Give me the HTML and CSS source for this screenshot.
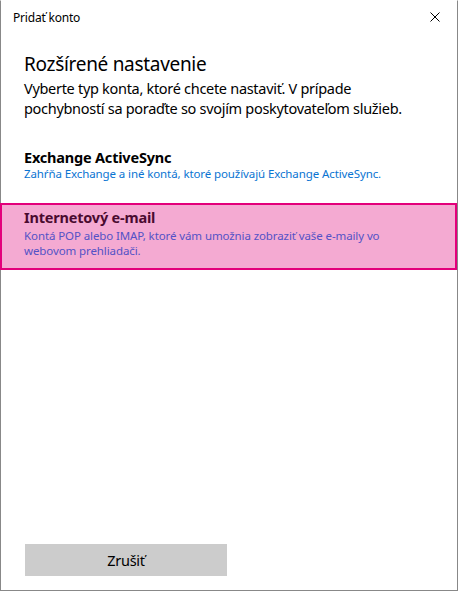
FILE: index.html
```html
<!DOCTYPE html>
<html lang="sk">
<head>
<meta charset="utf-8">
<title>Pridať konto</title>
<link rel="stylesheet" href="styles.css">
</head>
<body>
<div class="window">
  <div class="titlebar">
    <span class="title">Pridať konto</span>
    <svg class="close" width="10" height="10" viewBox="0 0 10 10"><path d="M0.5 0.5L9.5 9.5M9.5 0.5L0.5 9.5" stroke="#000" stroke-width="1" fill="none"/></svg>
  </div>
  <div class="intro">
    <h1 class="heading">Rozšírené nastavenie</h1>
    <p class="lead">Vyberte typ konta, ktoré chcete nastaviť. V prípade pochybností sa poraďte so svojím poskytovateľom služieb.</p>
  </div>
  <div class="options">
    <div class="option">
      <div class="opt-title">Exchange ActiveSync</div>
      <div class="opt-desc">Zahŕňa Exchange a iné kontá, ktoré používajú Exchange ActiveSync.</div>
    </div>
    <div class="option selected">
      <div class="opt-title">Internetový e-mail</div>
      <div class="opt-desc">Kontá POP alebo IMAP, ktoré vám umožnia zobraziť vaše e-maily vo webovom prehliadači.</div>
    </div>
  </div>
  <div class="spacer"></div>
  <div class="footer">
    <button class="btn">Zrušiť</button>
  </div>
</div>
</body>
</html>
```
FILE: styles.css
```css
html, body {
  margin: 0;
  padding: 0;
  background: #fff;
}
body {
  font-family: "Noto Sans", "Open Sans", sans-serif;
  color: #000;
}
.window {
  box-sizing: border-box;
  width: 458px;
  height: 591px;
  border: 1px solid #888;
  border-top-color: #fff;
  display: flex;
  flex-direction: column;
  background: #fff;
}
.titlebar {
  height: 31px;
  display: flex;
  align-items: center;
  justify-content: space-between;
  padding: 0 17px 0 12px;
}
.title {
  font-size: 12px;
  letter-spacing: -0.2px;
  margin-top: 2px;
}
.close {
  display: block;
  margin-top: 1px;
}
.intro {
  padding: 19px 43px 0 23px;
}
.heading {
  margin: 0;
  font-size: 19px;
  font-weight: 400;
  line-height: 26px;
  letter-spacing: -0.3px;
}
.lead {
  margin: 1px 0 0;
  font-size: 14.5px;
  line-height: 20px;
  letter-spacing: -0.3px;
}
.options {
  margin-top: 30px;
  display: flex;
  flex-direction: column;
}
.option {
  padding: 0 43px 0 23px;
}
.option + .option {
  margin-top: 22px;
}
.opt-title {
  font-size: 14.5px;
  font-weight: 700;
  line-height: 18px;
  letter-spacing: -0.2px;
}
.opt-desc {
  font-size: 11.5px;
  line-height: 15px;
  color: #0a74d2;
  letter-spacing: -0.1px;
}
.option.selected {
  margin-left: -1px;
  border: 2px solid #e3007b;
  background: #f4aad2;
  padding: 3px 41px 10px 22px;
}
.option.selected .opt-title {
  color: #4a0a30;
  margin-bottom: 2px;
}
.option.selected .opt-desc {
  color: #5352c6;
}
.spacer {
  flex: 1;
}
.footer {
  padding: 0 0 14px 24px;
}
.btn {
  display: block;
  width: 202px;
  height: 32px;
  border: none;
  background: #cccccc;
  font-family: "Noto Sans", "Open Sans", sans-serif;
  font-size: 14.5px;
  letter-spacing: -0.3px;
  color: #000;
  padding: 0;
}
```
